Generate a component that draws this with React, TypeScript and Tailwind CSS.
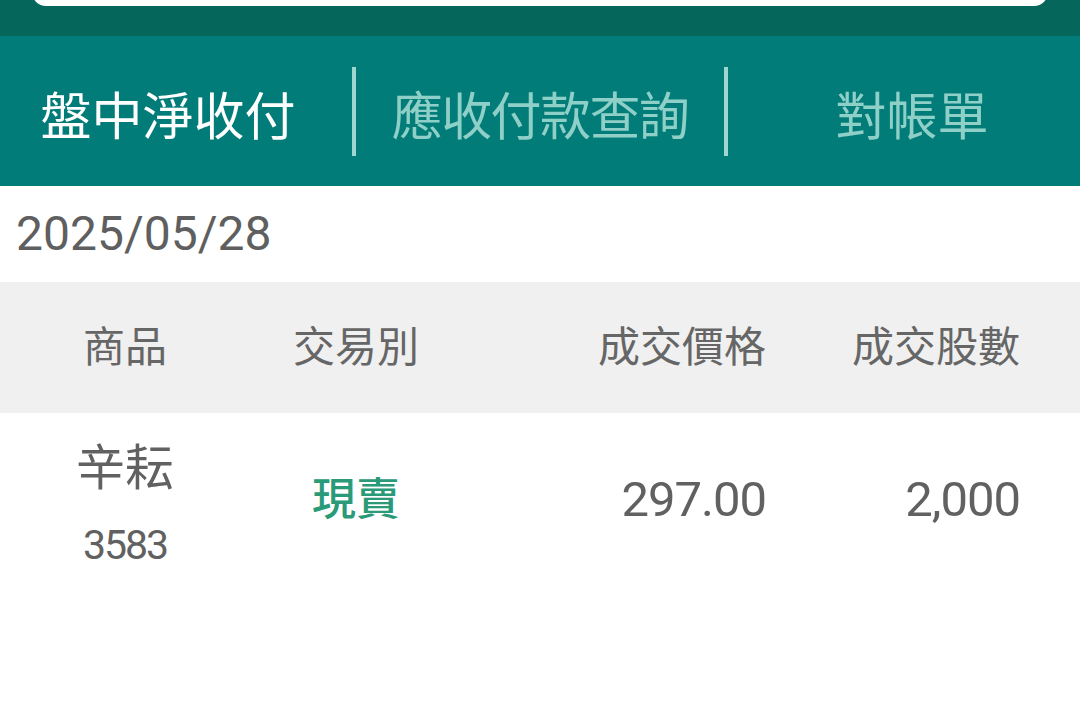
const font = { fontFamily: 'Roboto, "Noto Sans CJK TC", "Noto Sans", sans-serif' };

interface Trade {
  name: string;
  code: string;
  side: string;
  price: string;
  qty: string;
}

const trades: Trade[] = [
  { name: '辛耘', code: '3583', side: '現賣', price: '297.00', qty: '2,000' },
];

export default function App() {
  return (
    <div className="w-[1080px] h-[705px] bg-white overflow-hidden" style={font}>
      {/* Top bar with search box edge */}
      <div className="h-[36px] bg-[#05665b] overflow-hidden px-[32px]">
        <div className="-mt-[20px] h-[26px] bg-white rounded-b-[14px]" />
      </div>

      {/* Tabs */}
      <div className="h-[150px] bg-[#027c78] flex items-center text-[51px] leading-none">
        <div className="w-[352px] shrink-0 flex justify-center pr-[16px] pt-[12px] text-white">盤中淨收付</div>
        <div className="w-[4px] h-[89px] bg-[#9ed7d0] shrink-0" />
        <div className="w-[368px] shrink-0 flex justify-center pt-[12px] text-[#8ecfc8] tracking-[-1.6px]">應收付款查詢</div>
        <div className="w-[4px] h-[89px] bg-[#9ed7d0] shrink-0" />
        <div className="flex-1 flex justify-center pl-[16px] pt-[12px] text-[#8ecfc8]">對帳單</div>
      </div>

      {/* Date */}
      <div className="h-[96px] flex items-center pl-[16px] text-[48px] text-[#5f5f5f] leading-none">
        2025/05/28
      </div>

      {/* Table header */}
      <div className="h-[131px] bg-[#f0f0f0] grid grid-cols-[250px_212px_324px_294px] items-center text-[42px] text-[#666666] leading-none">
        <div className="text-center">商品</div>
        <div className="text-center">交易別</div>
        <div className="text-right pr-[20px]">成交價格</div>
        <div className="text-right pr-[60px]">成交股數</div>
      </div>

      {/* Rows */}
      {trades.map((r) => (
        <div
          key={r.code}
          className="h-[184px] grid grid-cols-[250px_212px_324px_294px] items-center text-[#616161] leading-none"
        >
          <div className="flex flex-col items-center gap-[32px]">
            <span className="text-[49px]">{r.name}</span>
            <span className="text-[41px] tracking-[-2px]">{r.code}</span>
          </div>
          <div className="text-center text-[44px] text-[#2a9a78] font-medium pb-[10px]">{r.side}</div>
          <div className="text-right pr-[20px] text-[49px] tracking-[-1px] pb-[12px]">{r.price}</div>
          <div className="text-right pr-[60px] text-[49px] tracking-[-1px] pb-[12px]">{r.qty}</div>
        </div>
      ))}
    </div>
  );
}
